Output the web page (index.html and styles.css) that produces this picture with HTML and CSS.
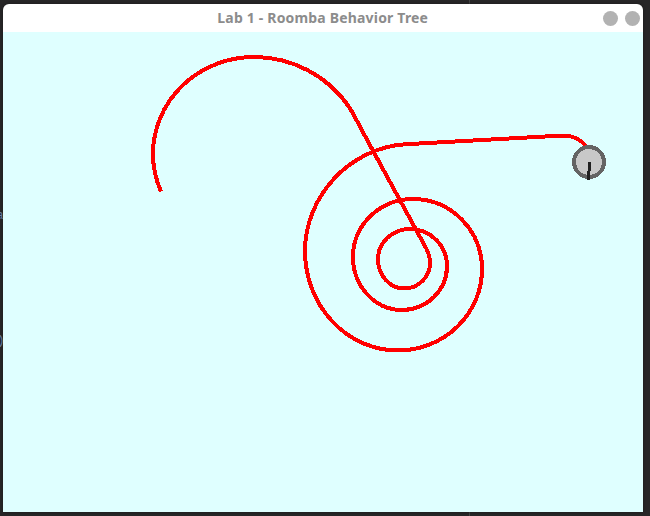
FILE: index.html
```html
<!DOCTYPE html>
<html lang="en">
<head>
<meta charset="utf-8">
<title>Lab 1 - Roomba Behavior Tree</title>
<link rel="stylesheet" href="styles.css">
</head>
<body>
<span class="behind behind-a">a</span>
<span class="behind behind-b">)</span>
<span class="divider divider-top"></span>
<span class="divider divider-bottom"></span>
<main class="window">
  <header class="titlebar">
    <h1 class="title">Lab 1 - Roomba Behavior Tree</h1>
    <div class="controls"><span class="control"></span><span class="control"></span></div>
  </header>
  <svg class="canvas" viewBox="3 32 640 480" width="640" height="480" shape-rendering="crispEdges">
    <path class="trail" d="M161 191.500C156 180 153 167 153 154A101 97 0 0 1 254 57C291 57 328 75 350 108.500Q353 113 361.700 130L426 248Q430 255 430 263A26 25.500 0 0 1 404 288.500A26 29.500 0 0 1 378 259A32 30 0 0 1 410 229A37 37 0 0 1 447 266A45 44 0 0 1 402 310A49 53 0 0 1 353 257A60 58 0 0 1 413 199A69 70 0 0 1 482 269A84 81.500 0 0 1 398 350.500A93 99.500 0 0 1 305 251C305 197 349 148 405 144.300L563 135.500Q578 135.500 587 147"/>
    <circle class="robot" cx="589" cy="162" r="15"/>
    <path class="heading" d="M589.500 162L588.500 180"/>
  </svg>
</main>
</body>
</html>
```
FILE: styles.css
```css
* { box-sizing: border-box; }
body {
  margin: 0;
  width: 650px;
  height: 516px;
  padding: 4px 7px 4px 3px;
  position: relative;
  overflow: hidden;
  background: #272627;
  font-family: "Noto Sans", "Open Sans", sans-serif;
}
.window {
  position: relative;
  width: 640px;
  height: 508px;
  border-radius: 6px 6px 0 0;
  overflow: hidden;
  background: #fff;
  box-shadow: 0 0 3px #1a1a1a;
}
.titlebar {
  display: grid;
  grid-template-columns: 1fr auto 1fr;
  align-items: center;
  height: 28px;
  padding-right: 3.5px;
}
.title {
  grid-column: 2;
  margin: 0 0 0 3px;
  color: #8c8c8c;
  font-size: 14px;
  line-height: 28px;
  font-weight: 700;
  letter-spacing: 0.18px;
  white-space: nowrap;
}
.controls {
  display: flex;
  justify-content: flex-end;
  gap: 7px;
}
.control {
  width: 15px;
  height: 15px;
  border-radius: 50%;
  background: #b2b2b2;
}
.canvas {
  display: block;
  background: #dfffff;
}
.trail {
  fill: none;
  stroke: #f00;
  stroke-width: 4;
}
.robot {
  fill: #c8c8c8;
  stroke: #646464;
  stroke-width: 4;
}
.heading {
  stroke: #202020;
  stroke-width: 3;
}
.behind {
  position: absolute;
  color: #6f86a8;
  font: 13px/14px "Liberation Mono", monospace;
}
.behind-a { left: -4px; top: 209px; }
.behind-b { left: -3px; top: 334px; }
.divider {
  position: absolute;
  left: 469px;
  width: 1px;
  height: 4px;
  background: #444;
}
.divider-top { top: 0; }
.divider-bottom { bottom: 0; }
```
